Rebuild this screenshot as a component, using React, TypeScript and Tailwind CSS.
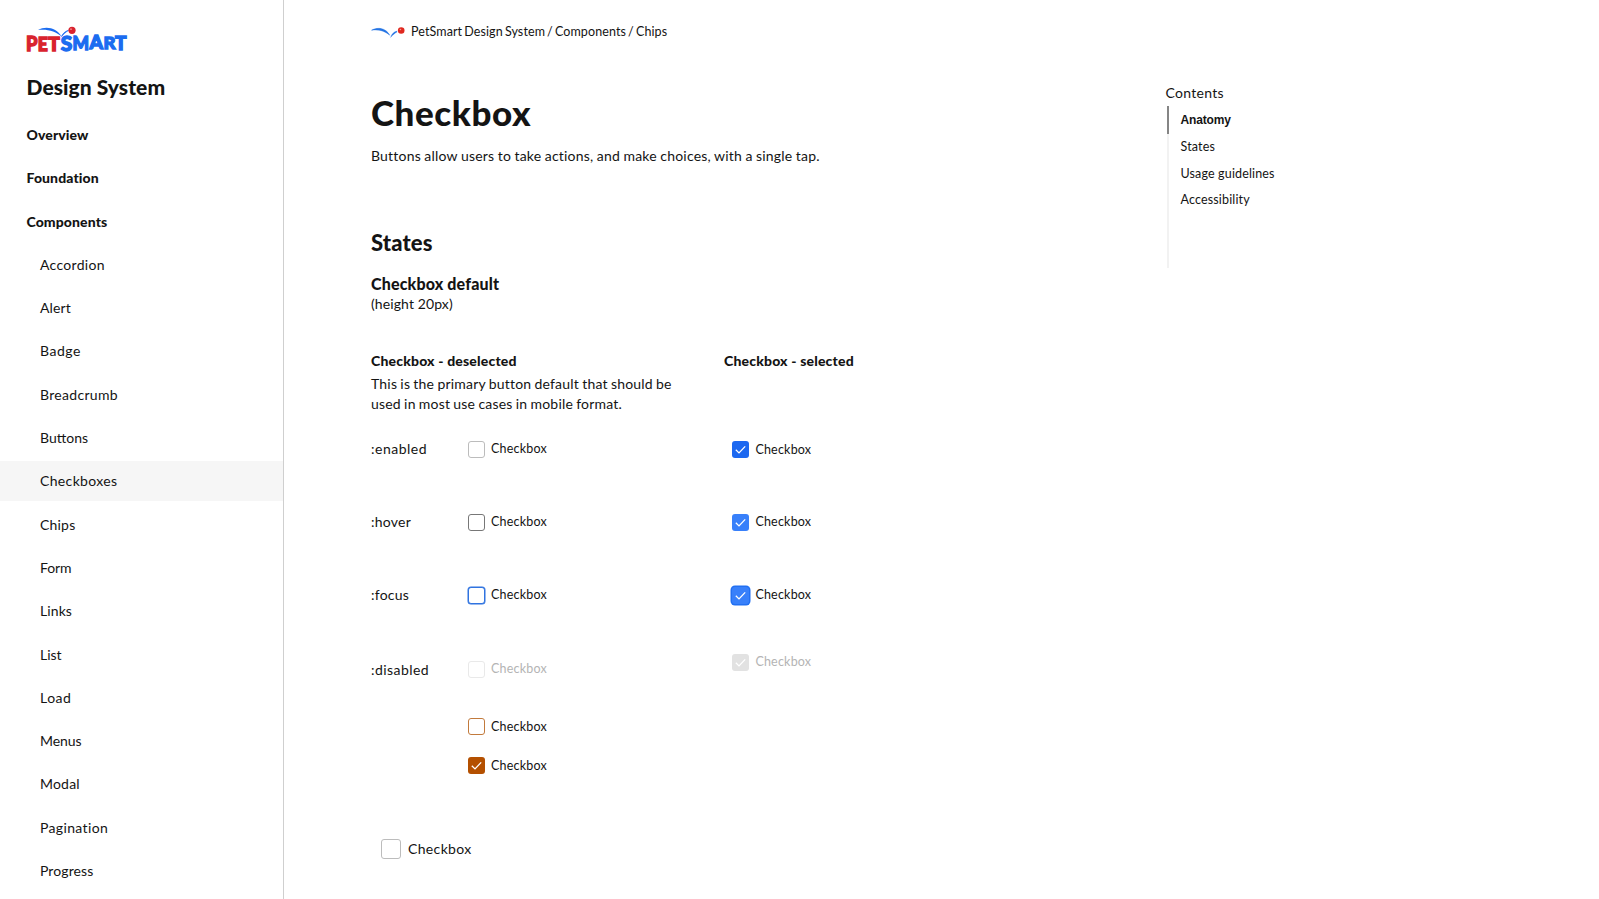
import React from 'react';
import clsx from 'clsx';

const sections = ['Overview', 'Foundation', 'Components'];

const components = [
  { name: 'Accordion', spacing: 'tracking-[0.3px]' },
  { name: 'Alert', spacing: 'tracking-[0.1px]' },
  { name: 'Badge', spacing: 'tracking-[0.5px]' },
  { name: 'Breadcrumb', spacing: 'tracking-[0.3px]' },
  { name: 'Buttons', spacing: 'tracking-[0px]' },
  { name: 'Checkboxes', spacing: 'tracking-[0.35px]' },
  { name: 'Chips', spacing: 'tracking-[0.2px]' },
  { name: 'Form', spacing: 'tracking-[-0.1px]' },
  { name: 'Links', spacing: 'tracking-[0.1px]' },
  { name: 'List', spacing: 'tracking-[0px]' },
  { name: 'Load', spacing: 'tracking-[0.5px]' },
  { name: 'Menus', spacing: 'tracking-[-0.1px]' },
  { name: 'Modal', spacing: 'tracking-[0.2px]' },
  { name: 'Pagination', spacing: 'tracking-[0.35px]' },
  { name: 'Progress', spacing: 'tracking-[0.1px]' },
];

const boxStyles = {
  enabled: 'border border-[#bcbcbc] bg-white',
  hover: 'border border-[#777777] bg-white',
  focus: 'border border-[#2f73e0] bg-white ring-[0.5px] ring-[#2f73e0]',
  disabled: 'border border-[#e9e9e9] bg-white',
  error: 'border border-[#c27a3c] bg-white',
  errorChecked: 'bg-[#b45000]',
  checked: 'bg-[#1c68f0]',
  checkedHover: 'bg-[#3880fa]',
  checkedFocus: 'bg-[#3880fa] ring-[1.5px] ring-[#2270f2]',
  checkedDisabled: 'bg-[#e2e2e2]',
};

interface CheckboxProps {
  state: keyof typeof boxStyles;
  large?: boolean;
}

function Checkbox({ state, large }: CheckboxProps) {
  const checked = state.toLowerCase().includes('checked');
  const disabled = state.toLowerCase().includes('disabled');

  return (
    <div className={clsx('flex items-center', large ? 'h-5 gap-[7px]' : 'h-[17px] gap-1.5')}>
      <span
        className={clsx(
          'flex shrink-0 items-center justify-center rounded-[3px]',
          large ? 'size-5' : 'size-[17px]',
          boxStyles[state],
        )}
      >
        {checked && (
          <svg width="17" height="17" viewBox="0 0 17 17" fill="none">
            <path d="M3.8 8.8 L7 11.9 L13.2 5.4" stroke="white" strokeWidth="1.3" />
          </svg>
        )}
      </span>
      <span
        className={clsx(
          'whitespace-nowrap',
          large ? 'text-[14px] tracking-[0.35px]' : 'text-[12.5px] tracking-[0.2px]',
          disabled && 'text-[#b4b4b4]',
        )}
      >
        Checkbox
      </span>
    </div>
  );
}

function Logo() {
  return (
    <svg className="block" width="104" height="30" viewBox="0 0 104 30">
      <g fontFamily="Lato, sans-serif" fontWeight="900" strokeWidth="1.3">
        <g fill="#d9232e" stroke="#d9232e">
          <text x="0" y="25" fontSize="20.5" textLength="11.5" lengthAdjust="spacingAndGlyphs">P</text>
          <text x="11.8" y="25.2" fontSize="18" textLength="10" lengthAdjust="spacingAndGlyphs">E</text>
          <text x="22.2" y="25.2" fontSize="18" textLength="11.5" lengthAdjust="spacingAndGlyphs">T</text>
        </g>
        <g fill="#1b6cf0" stroke="#1b6cf0">
          <text x="34.8" y="25" fontSize="20" textLength="11.5" lengthAdjust="spacingAndGlyphs">S</text>
          <text x="46.5" y="24" fontSize="18" textLength="16.5" lengthAdjust="spacingAndGlyphs">M</text>
          <text x="63.6" y="22.8" fontSize="18" textLength="13.5" lengthAdjust="spacingAndGlyphs">A</text>
          <text x="77.4" y="22.8" fontSize="17.5" textLength="12" lengthAdjust="spacingAndGlyphs">R</text>
          <text x="89" y="24" fontSize="18.5" textLength="11.5" lengthAdjust="spacingAndGlyphs">T</text>
        </g>
      </g>
      <path d="M12 4 C20 -0.7 31 2 35.5 10.5 C30 5.4 21 2.7 12 4 Z" fill="#1b6cf0" />
      <path d="M35.5 10.5 C36.5 7.8 39 5.3 42.5 4.3 C39.5 6.3 37.5 8.3 35.5 10.5 Z" fill="#1b6cf0" stroke="#1b6cf0" strokeWidth="0.7" />
      <circle cx="46" cy="4.3" r="3.6" fill="#d9232e" />
      <circle cx="45" cy="3.2" r="0.9" fill="#f08a8a" />
    </svg>
  );
}

function BallIcon() {
  return (
    <svg className="block" width="34" height="12" viewBox="0 0 34 12">
      <path d="M0.5 4.2 C7 0.8 14.5 1.8 18.8 9.2 C13.5 4.6 7 3.2 0.5 4.2 Z" fill="#2474e4" stroke="#2474e4" strokeWidth="0.4" />
      <path d="M19.6 11.4 C20.5 8.4 22.3 6.2 25.6 5.1 L26.1 5.9 C23.8 7.3 21.4 9 19.6 11.4 Z" fill="#2474e4" stroke="#2474e4" strokeWidth="0.3" />
      <circle cx="30.2" cy="4.5" r="3.3" fill="#e0281f" />
      <circle cx="29.4" cy="3.5" r="0.8" fill="#f29a94" />
    </svg>
  );
}

function Sidebar() {
  return (
    <aside className="flex h-full w-[284px] shrink-0 flex-col overflow-hidden border-r border-[#cfcfcf]">
      <div className="mt-[26px] ml-[26px]">
        <Logo />
      </div>
      <h2 className="mt-[17px] ml-[26.5px] h-7 text-[21px] leading-7 font-black tracking-[0.05px]">Design System</h2>
      <nav className="mt-[14px] flex flex-col gap-[3.31px] text-[14px] leading-10">
        {sections.map((section) => (
          <a key={section} className="h-10 shrink-0 pl-[26.5px] font-black tracking-[0.1px]">
            {section}
          </a>
        ))}
        {components.map((item) => (
          <a
            key={item.name}
            className={clsx('h-10 shrink-0 pl-10', item.spacing, item.name === 'Checkboxes' && 'bg-[#f6f6f6]')}
          >
            {item.name}
          </a>
        ))}
      </nav>
    </aside>
  );
}

function Contents() {
  return (
    <aside className="mt-[83px] ml-[311.5px] w-[200px] shrink-0">
      <p className="text-[14px] leading-5 tracking-[0.3px]">Contents</p>
      <div className="mt-[3px] ml-px flex h-[162px]">
        <div className="w-0.5 bg-[#f2f2f2]">
          <div className="h-7 bg-[#858585]" />
        </div>
        <ul className="mt-px ml-3 text-[12.5px] leading-[26.7px] whitespace-nowrap">
          <li className="font-['Liberation_Sans',sans-serif] text-[12px] leading-[27px] font-bold tracking-[-0.15px]">
            Anatomy
          </li>
          <li className="tracking-[0.15px]">States</li>
          <li className="tracking-[0.15px]">Usage guidelines</li>
          <li className="tracking-[0.15px]">Accessibility</li>
        </ul>
      </div>
    </aside>
  );
}

export default function App() {
  return (
    <div className="flex h-[899px] w-[1599px] overflow-hidden bg-white font-[Lato,sans-serif] text-[14px] leading-5 text-[#141414]">
      <Sidebar />

      <main className="ml-[87px] w-[483px] shrink-0 whitespace-nowrap">
        <div className="mt-[22px] flex h-5 items-center gap-1.5 text-[12.5px]">
          <BallIcon />
          <span className="tracking-[0.1px] [word-spacing:-1.2px]">PetSmart Design System / Components / Chips</span>
        </div>

        <h1 className="mt-[46px] h-12 text-[35px] leading-12 font-black tracking-[0.55px]">Checkbox</h1>
        <p className="mt-2.5 tracking-[0.2px] [word-spacing:-0.35px]">
          Buttons allow users to take actions, and make choices, with a single tap.
        </p>

        <h2 className="mt-[63px] h-7 text-[22px] leading-7 font-black tracking-[0.15px]">States</h2>
        <h3 className="mt-[17px] text-[16px] leading-5 font-black tracking-[0.15px]">Checkbox default</h3>
        <p className="tracking-[0.1px]">(height 20px)</p>

        <div className="mt-[37px] flex">
          <section className="w-[353px] shrink-0">
            <h4 className="font-black tracking-[0.18px]">Checkbox - deselected</h4>
            <p className="mt-[3px] tracking-[0.2px] [word-spacing:-0.6px]">
              This is the primary button default that should be
              <br />
              used in most use cases in mobile format.
            </p>
            <div className="mt-[25px] grid grid-cols-[97px_1fr] items-center">
              <span className="mb-[53px] tracking-[0.5px]">:enabled</span>
              <div className="mb-[53px]"><Checkbox state="enabled" /></div>
              <span className="mb-[53px] tracking-[0.25px]">:hover</span>
              <div className="mb-[53px]"><Checkbox state="hover" /></div>
              <span className="mb-[53px] tracking-[0.25px]">:focus</span>
              <div className="mb-[53px]"><Checkbox state="focus" /></div>
              <span className="mt-0.5 tracking-[0.45px]">:disabled</span>
              <Checkbox state="disabled" />
            </div>
            <div className="mt-[38px] ml-[97px] flex flex-col gap-[22px]">
              <Checkbox state="error" />
              <Checkbox state="errorChecked" />
            </div>
          </section>

          <section>
            <h4 className="font-black tracking-[0.18px]">Checkbox - selected</h4>
            <div className="mt-[70px] ml-[8.4px] flex flex-col">
              <Checkbox state="checked" />
              <div className="mt-[55.5px]"><Checkbox state="checkedHover" /></div>
              <div className="mt-14"><Checkbox state="checkedFocus" /></div>
              <div className="mt-[50px]"><Checkbox state="checkedDisabled" /></div>
            </div>
          </section>
        </div>

        <div className="mt-[65px] ml-2.5">
          <Checkbox state="enabled" large />
        </div>
      </main>

      <Contents />
    </div>
  );
}
